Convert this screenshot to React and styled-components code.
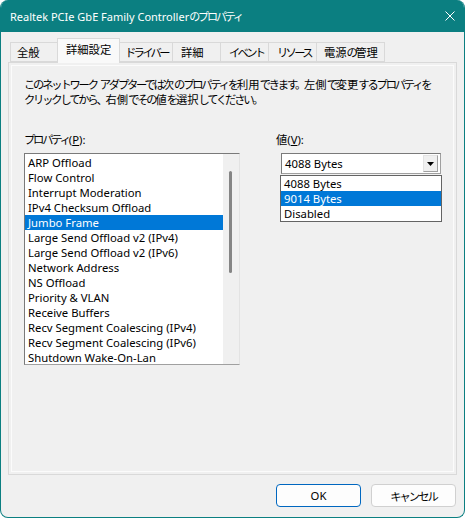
import React from 'react';
import styled, { createGlobalStyle } from 'styled-components';

const TEAL = '#0b7f81';
const ACCENT = '#0078d7';

const GlobalStyle = createGlobalStyle`
  html, body { margin: 0; padding: 0; background: #ffffff; }
  body {
    font-family: "Noto Sans", "Noto Sans CJK JP", sans-serif;
    font-size: 11.3px;
    color: #000;
  }
  * { box-sizing: border-box; }
`;

// Yu Gothic UI kana are much narrower than Noto's full-width ones,
// so kana runs get tightened while kanji and latin keep their width.
const KanaRun = styled.span`
  letter-spacing: ${p => p.$ls ?? -2.2}px;
`;

function Jp({ text, ls }) {
  return text.split(/([\u3000-\u30ff\uff00-\uffef]+)/).map((part, i) =>
    /[\u3000-\u30ff\uff00-\uffef]/.test(part) ? (
      <KanaRun key={i} $ls={ls}>{part}</KanaRun>
    ) : (
      part
    )
  );
}

const Window = styled.div`
  width: 465px;
  height: 518px;
  border: 1px solid ${TEAL};
  border-top: none;
  border-radius: 8px;
  background: #f0f0f0;
  display: flex;
  flex-direction: column;
  overflow: hidden;
`;

const TitleBar = styled.div`
  height: 32px;
  margin: 0 -1px;
  padding: 0 10px;
  background: ${TEAL};
  color: #fff;
  display: flex;
  align-items: center;
  justify-content: space-between;
  flex-shrink: 0;
`;

const Title = styled.span`
  line-height: 1;
  font-size: 11px;
`;

const CloseIcon = styled.svg`
  width: 10px;
  height: 10px;
`;

const Body = styled.div`
  flex: 1;
  display: flex;
  flex-direction: column;
  padding: 6px 7px 10px 7px;
`;

const TabRow = styled.div`
  display: flex;
  align-items: flex-end;
  height: 24px;
  margin-left: 2px;
`;

const Tab = styled.div`
  width: ${p => p.$w}px;
  height: ${p => (p.$active ? 25 : 20)}px;
  margin-bottom: ${p => (p.$active ? -1 : 0)}px;
  margin-left: -1px;
  padding: 0 0 ${p => (p.$active ? 4 : 0)}px ${p => p.$pad}px;
  display: flex;
  align-items: center;
  border: 1px solid #d9d9d9;
  border-bottom: ${p => (p.$active ? 'none' : '1px solid #d9d9d9')};
  background: ${p => (p.$active ? '#f9f9f9' : '#f0f0f0')};
  position: relative;
  z-index: ${p => (p.$active ? 2 : 1)};
  white-space: nowrap;
  &:first-child { margin-left: 0; }
`;

const Panel = styled.div`
  flex: 1;
  border: 1px solid #d9d9d9;
  background: #f0f0f0;
  box-shadow: inset 0 0 0 2px #f0f0f0, inset 0 0 0 3px #fbfbfb;
  padding: 14px 15px 0 15px;
`;

const Intro = styled.p`
  margin: 0;
  line-height: 15px;
  white-space: nowrap;
`;

const Columns = styled.div`
  display: grid;
  grid-template-columns: 216px 1fr;
  column-gap: 36px;
  margin-top: 25px;
`;

const Column = styled.div`
  display: flex;
  flex-direction: column;
`;

const FieldLabel = styled.div`
  line-height: 15px;
  margin-bottom: 6px;
`;

const ListBox = styled.div`
  width: 216px;
  height: 212px;
  background: #fff;
  border-top: 1px solid #7a7a7a;
  border-left: 1px solid #7a7a7a;
  border-bottom: 1px solid #a0a0a0;
  border-right: 1px solid #e3e3e3;
  display: flex;
`;

const Items = styled.div`
  flex: 1;
  padding-top: 1px;
  overflow: hidden;
`;

const Item = styled.div`
  height: 15px;
  line-height: 15px;
  padding-left: 3px;
  white-space: nowrap;
  background: ${p => (p.$selected ? ACCENT : 'transparent')};
  color: ${p => (p.$selected ? '#fff' : '#000')};
`;

const ScrollTrack = styled.div`
  width: 16px;
  background: #f0f0f0;
  padding: 17px 0 0 6px;
`;

const ScrollThumb = styled.div`
  width: 3px;
  height: 102px;
  border-radius: 2px;
  background: #858585;
`;

const ComboWrap = styled.div`
  position: relative;
  margin-left: 5px;
  width: 160px;
`;

const Combo = styled.div`
  height: 21px;
  background: #fff;
  border-top: 1px solid #7a7a7a;
  border-left: 1px solid #7a7a7a;
  border-bottom: 1px solid #a0a0a0;
  border-right: 1px solid #a0a0a0;
  display: flex;
  align-items: center;
  padding: 1px 2px 1px 2px;
`;

const ComboText = styled.span`
  flex: 1;
  padding-left: 1px;
`;

const ComboButton = styled.div`
  width: 15px;
  height: 17px;
  background: #f0f0f0;
  border: 1px solid #e3e3e3;
  border-right-color: #a0a0a0;
  border-bottom-color: #a0a0a0;
  display: flex;
  align-items: center;
  justify-content: center;
`;

const DropList = styled.div`
  position: absolute;
  top: 22px;
  left: -1px;
  width: 162px;
  background: #fff;
  border: 1px solid #646464;
  z-index: 5;
`;

const Footer = styled.div`
  display: flex;
  justify-content: flex-end;
  gap: 10px;
  margin-top: 9px;
  padding-right: 1px;
`;

const Button = styled.button`
  width: 85px;
  height: 23px;
  border-radius: 4px;
  font-family: "Noto Sans", "Noto Sans CJK JP", sans-serif;
  font-size: 11.3px;
  color: #000;
  background: #fdfdfd;
  border: 1px solid ${p => (p.$default ? '#0067c0' : '#d0d0d0')};
  padding: 0;
`;

const tabs = [
  { label: '全般', w: 48, pad: 6 },
  { label: '詳細設定', w: 63, pad: 8 },
  { label: 'ドライバー', w: 54, pad: 5 },
  { label: '詳細', w: 49, pad: 8 },
  { label: 'イベント', w: 49, pad: 8 },
  { label: 'リソース', w: 49, pad: 8 },
  { label: '電源の管理', w: 69, pad: 7 },
];

const properties = [
  'ARP Offload',
  'Flow Control',
  'Interrupt Moderation',
  'IPv4 Checksum Offload',
  'Jumbo Frame',
  'Large Send Offload v2 (IPv4)',
  'Large Send Offload v2 (IPv6)',
  'Network Address',
  'NS Offload',
  'Priority & VLAN',
  'Receive Buffers',
  'Recv Segment Coalescing (IPv4)',
  'Recv Segment Coalescing (IPv6)',
  'Shutdown Wake-On-Lan',
];

const values = ['4088 Bytes', '9014 Bytes', 'Disabled'];

export default function App() {
  return (
    <>
      <GlobalStyle />
      <Window>
        <TitleBar>
          <Title>
            Realtek PCIe GbE Family Controller<Jp text="のプロパティ" ls={-2.1} />
          </Title>
          <CloseIcon viewBox="0 0 10 10">
            <path d="M0.5 0.5 L9.5 9.5 M9.5 0.5 L0.5 9.5" stroke="#fff" strokeWidth="1" fill="none" />
          </CloseIcon>
        </TitleBar>
        <Body>
          <TabRow>
            {tabs.map((t, i) => (
              <Tab key={t.label} $w={t.w} $pad={t.pad} $active={i === 1}>
                <Jp text={t.label} ls={-2.7} />
              </Tab>
            ))}
          </TabRow>
          <Panel>
            <Intro>
              <Jp text="このネットワーク アダプターでは次のプロパティを利用できます。左側で変更するプロパティを" />
              <br />
              <Jp text="クリックしてから、右側でその値を選択してください。" />
            </Intro>
            <Columns>
              <Column>
                <FieldLabel>
                  <Jp text="プロパティ" />(<u>P</u>):
                </FieldLabel>
                <ListBox>
                  <Items>
                    {properties.map(p => (
                      <Item key={p} $selected={p === 'Jumbo Frame'}>
                        {p}
                      </Item>
                    ))}
                  </Items>
                  <ScrollTrack>
                    <ScrollThumb />
                  </ScrollTrack>
                </ListBox>
              </Column>
              <Column>
                <FieldLabel>
                  値(<u>V</u>):
                </FieldLabel>
                <ComboWrap>
                  <Combo>
                    <ComboText>4088 Bytes</ComboText>
                    <ComboButton>
                      <svg width="7" height="4" viewBox="0 0 7 4">
                        <path d="M0 0 H7 L3.5 4 Z" fill="#000" />
                      </svg>
                    </ComboButton>
                  </Combo>
                  <DropList>
                    {values.map(v => (
                      <Item key={v} $selected={v === '9014 Bytes'}>
                        {v}
                      </Item>
                    ))}
                  </DropList>
                </ComboWrap>
              </Column>
            </Columns>
          </Panel>
          <Footer>
            <Button $default>OK</Button>
            <Button>
              <Jp text="キャンセル" ls={-2} />
            </Button>
          </Footer>
        </Body>
      </Window>
    </>
  );
}
